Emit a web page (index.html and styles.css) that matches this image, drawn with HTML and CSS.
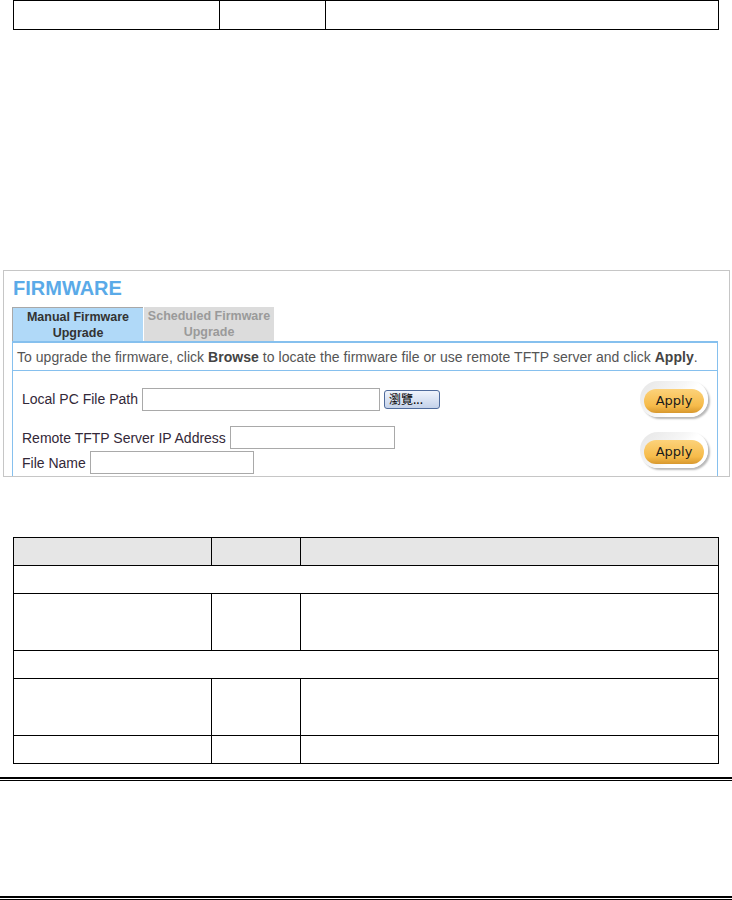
FILE: index.html
```html
<!DOCTYPE html>
<html lang="en">
<head>
  <meta charset="UTF-8">
  <title>Firmware</title>
  <link rel="stylesheet" href="styles.css">
</head>
<body>

  <table class="doc-table top-table">
    <tr>
      <td class="c1"></td>
      <td class="c2"></td>
      <td></td>
    </tr>
  </table>

  <!-- screenshot of the router page -->
  <div class="panel">
    <h2>FIRMWARE</h2>

    <div class="tabs">
      <div class="tab active">Manual Firmware<br>Upgrade</div>
      <div class="tab">Scheduled Firmware<br>Upgrade</div>
    </div>

    <div class="info">To upgrade the firmware, click <b>Browse</b> to locate the firmware file or use remote TFTP server and click <b>Apply</b>.</div>

    <div class="form-box">
      <div class="group">
        <div class="fields">
          <div class="field">
            <span>Local PC File Path</span>
            <input type="text" class="in-path">
            <span class="browse">瀏覽...</span>
          </div>
        </div>
        <div class="apply"><span>Apply</span></div>
      </div>

      <div class="group group-tftp">
        <div class="fields">
          <div class="field">
            <span>Remote TFTP Server IP Address</span>
            <input type="text" class="in-ip">
          </div>
          <div class="field">
            <span>File Name</span>
            <input type="text" class="in-name">
          </div>
        </div>
        <div class="apply"><span>Apply</span></div>
      </div>
    </div>
  </div>

  <table class="doc-table bottom-table">
    <tr class="head">
      <td class="b1"></td>
      <td class="b2"></td>
      <td></td>
    </tr>
    <tr class="section"><td colspan="3"></td></tr>
    <tr class="tall"><td></td><td></td><td></td></tr>
    <tr class="section"><td colspan="3"></td></tr>
    <tr class="tall"><td></td><td></td><td></td></tr>
    <tr class="section"><td></td><td></td><td></td></tr>
  </table>

  <div class="rule rule-first"></div>
  <div class="rule rule-last"></div>

</body>
</html>
```

FILE: styles.css
```css
body{
  margin: 0;
  padding: 0;
  background: #fff;
  font-family: "Liberation Sans", Arial, sans-serif;
  color: #000;
}

/* document tables */
.doc-table{
  border-collapse: collapse;
  table-layout: fixed;
  margin-left: 13px;
  width: 706px;
}

.doc-table td{
  border: 1px solid #000;
  padding: 0;
}

.top-table tr{ height: 29px; }
.top-table td.c1{ width: 205px; }
.top-table td.c2{ width: 105px; }

.bottom-table{ margin-top: 60px; }
.bottom-table tr{ height: 28px; }
.bottom-table tr.head td{ background: #e6e6e6; }
.bottom-table tr.tall{ height: 57px; }
.bottom-table td.b1{ width: 197px; }
.bottom-table td.b2{ width: 88px; }

/* firmware panel */
.panel{
  box-sizing: border-box;
  width: 727px;
  height: 207px;
  margin: 240px 0 0 3px;
  padding: 6px 11px 0 8px;
  border: 1px solid #c6c6c6;
  overflow: hidden;
}

.panel h2{
  margin: 0 0 8px 1px;
  font-size: 20px;
  line-height: 22px;
  font-weight: bold;
  color: #5aaae8;
}

.tabs{
  display: flex;
  gap: 1px;
}

.tab{
  box-sizing: border-box;
  width: 130px;
  height: 34px;
  padding-top: 1px;
  font-size: 12.5px;
  line-height: 16px;
  font-weight: bold;
  text-align: center;
  color: #9a9a9a;
  background: #dcdcdc;
}

.tab.active{
  width: 131px;
  color: #333;
  background: #b0d9f8;
  border-top: 1px solid #a8a8a8;
  border-left: 1px solid #a8a8a8;
}

.info{
  box-sizing: border-box;
  height: 30px;
  padding: 6px 0 0 4px;
  border: 1px solid #86c0ee;
  border-top-width: 2px;
  font-size: 14px;
  letter-spacing: 0.04px;
  color: #555;
  white-space: nowrap;
}

.info b{ color: #444; }

.form-box{
  border: 1px solid #86c0ee;
  border-top: 0;
  padding: 10px 9px 6px 9px;
  font-size: 14px;
  color: #332838;
}

.group{
  display: flex;
  align-items: center;
  justify-content: space-between;
}

.group-tftp{ margin-top: 9px; }

.fields{
  display: flex;
  flex-direction: column;
  gap: 2px;
}

.field{
  display: flex;
  align-items: center;
  gap: 4px;
}

.field input{
  box-sizing: border-box;
  height: 23px;
  margin: 0;
  border: 1px solid #a9a9a9;
  background: #fff;
}

.in-path{ width: 238px; }
.in-ip{ width: 165px; }
.in-name{ width: 164px; }

.browse{
  box-sizing: border-box;
  width: 56px;
  height: 19px;
  padding-left: 4px;
  border: 1px solid #4f6b9c;
  border-radius: 3px;
  background: linear-gradient(#f0f4fc, #c4d2ea);
  font-family: "Noto Sans CJK TC", sans-serif;
  font-size: 12px;
  line-height: 16px;
  color: #000;
}

/* yellow pill buttons */
.apply{
  box-sizing: border-box;
  width: 68px;
  height: 36px;
  padding: 8px 0 0 4px;
  border-radius: 18px;
  background: linear-gradient(135deg, #e6e6e6 0%, #f6f6f6 45%, #fff 60%);
  box-shadow: 2px 2px 2px #b9b9b9;
}

.apply span{
  display: block;
  width: 60px;
  height: 24px;
  border-radius: 12px;
  background: linear-gradient(#fcd27a, #f6bb4a 70%, #d8982e);
  font-family: "DejaVu Sans", Verdana, sans-serif;
  font-size: 13px;
  line-height: 23px;
  text-align: center;
  color: #1a1a1a;
}

/* page rules */
.rule{
  height: 1px;
  border-top: 2px solid #000;
  border-bottom: 1px solid #000;
}

.rule-first{ margin-top: 13px; }
.rule-last{ margin-top: 115px; }
```
